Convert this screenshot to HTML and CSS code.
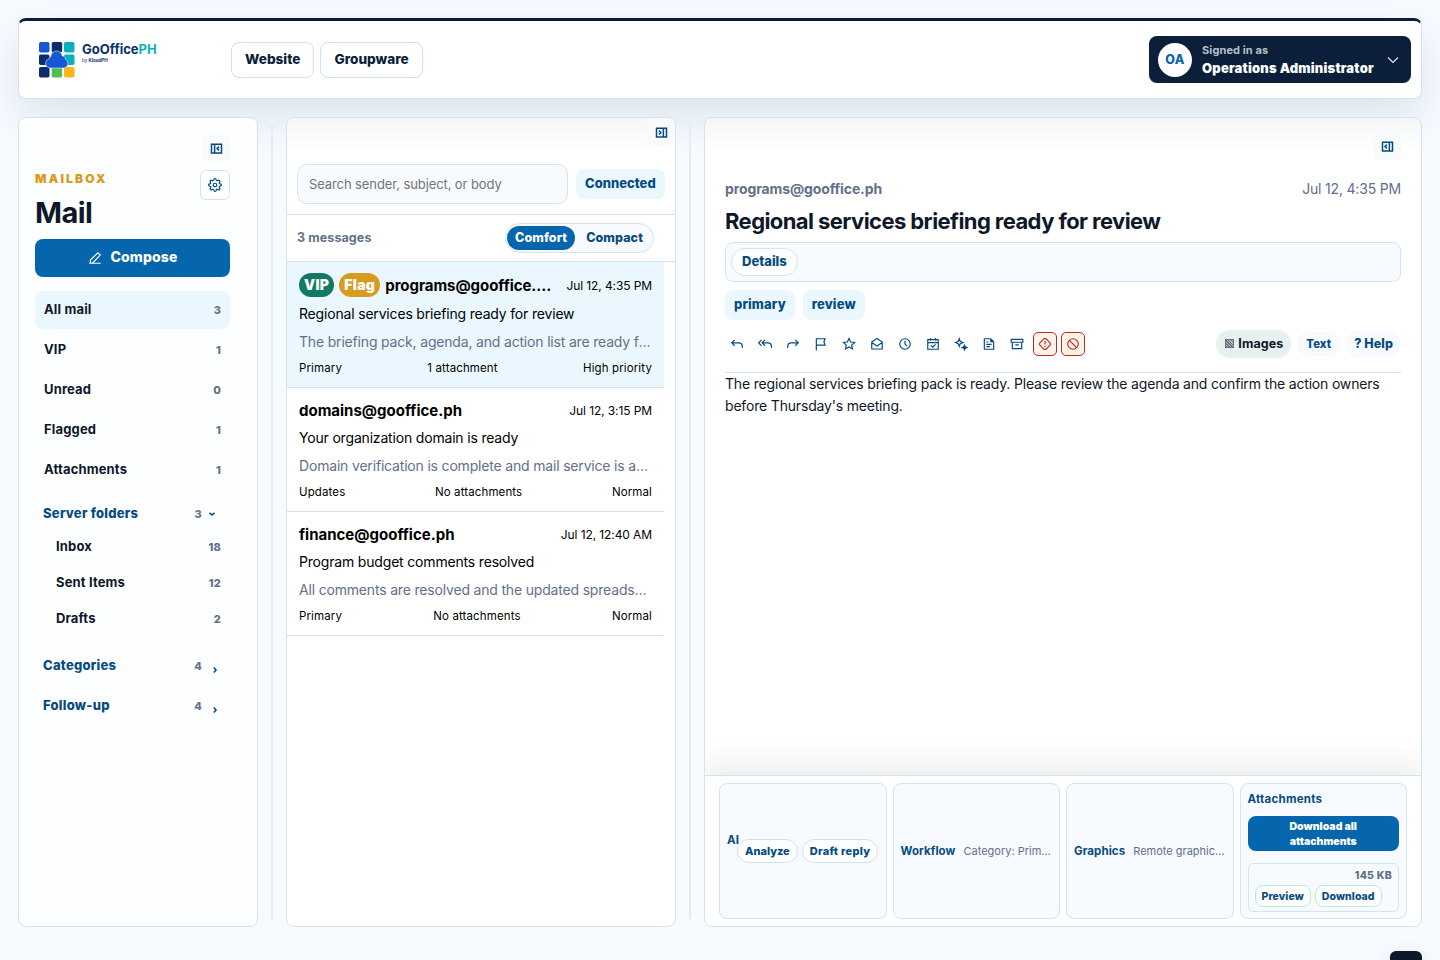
FILE: index.html
```html
<!DOCTYPE html>
<html lang="en">
<head>
    <meta charset="UTF-8">
    <title>GoOfficePH Mail</title>
    <link rel="stylesheet" href="styles.css">
</head>
<body>
    <!-- Top bar -->
    <header class="topbar">
        <div class="brand">
            <svg class="brand-mark" viewBox="0 0 36 36">
                <rect x="0" y="0" width="10.5" height="10.5" rx="1.8" fill="#1657d6"/>
                <rect x="12.7" y="0" width="10.5" height="10.5" rx="1.8" fill="#0b2e6b"/>
                <rect x="25" y="0" width="10.5" height="10.5" rx="1.8" fill="#0cb0ba"/>
                <rect x="0" y="12.5" width="10.5" height="10.5" rx="1.8" fill="#0b2e6b"/>
                <rect x="25" y="12.5" width="10.5" height="10.5" rx="1.8" fill="#0cb0ba"/>
                <rect x="0" y="25" width="10.5" height="10.5" rx="1.8" fill="#0b2e6b"/>
                <rect x="12.7" y="25" width="10.5" height="10.5" rx="1.8" fill="#54b957"/>
                <rect x="25" y="25" width="10.5" height="10.5" rx="1.8" fill="#f8b51c"/>
                <path d="M10.500 26a4.700 4.700 0 0 1-.5-9.200c.2-.9.8-1.500 1.700-2C12.200 11 14.500 9 17.500 9s5.300 2 5.800 5c2 .2 3.200 1.600 3.300 3.500 1.400.8 2.200 2.200 2.200 4A4.300 4.300 0 0 1 24.500 26z" fill="#1657d6" stroke="#fff" stroke-width=".5"/>
            </svg>
            <div class="brand-text">
                <div class="brand-name">GoOffice<span>PH</span></div>
                <div class="brand-sub">by <b>KloudPH</b></div>
            </div>
        </div>
        <nav class="topnav">
            <a class="topnav-link">Website</a>
            <a class="topnav-link">Groupware</a>
        </nav>
        <div class="account">
            <div class="avatar">OA</div>
            <div class="account-text">
                <span class="account-label">Signed in as</span>
                <span class="account-name">Operations Administrator</span>
            </div>
            <svg class="account-arrow" viewBox="0 0 12 12"><path d="M1 3.500l5 5 5-5"/></svg>
        </div>
    </header>

    <main class="workspace">
        <!-- Folders -->
        <aside class="panel sidebar">
            <div class="sidebar-head">
                <div>
                    <div class="eyebrow">Mailbox</div>
                    <h1>Mail</h1>
                </div>
                <div class="sidebar-tools">
                    <button class="pane-toggle"><svg class="icon" viewBox="0 0 24 24"><path d="M4 5h16v14H4zM9 5v14M16 9l-3 3 3 3"/></svg></button>
                    <button class="settings-btn"><svg class="icon gear" viewBox="0 0 24 24"><circle cx="12" cy="12" r="3"/><path d="M19.4 15a1.65 1.65 0 0 0 .33 1.82l.06.06a2 2 0 0 1 0 2.83 2 2 0 0 1-2.83 0l-.06-.06a1.65 1.65 0 0 0-1.82-.33 1.65 1.65 0 0 0-1 1.51V21a2 2 0 0 1-2 2 2 2 0 0 1-2-2v-.09A1.65 1.65 0 0 0 9 19.4a1.65 1.65 0 0 0-1.82.33l-.06.06a2 2 0 0 1-2.83 0 2 2 0 0 1 0-2.83l.06-.06a1.65 1.65 0 0 0 .33-1.82 1.65 1.65 0 0 0-1.51-1H3a2 2 0 0 1-2-2 2 2 0 0 1 2-2h.09A1.65 1.65 0 0 0 4.6 9a1.65 1.65 0 0 0-.33-1.82l-.06-.06a2 2 0 0 1 0-2.83 2 2 0 0 1 2.83 0l.06.06a1.65 1.65 0 0 0 1.82.33H9a1.65 1.65 0 0 0 1-1.51V3a2 2 0 0 1 2-2 2 2 0 0 1 2 2v.09a1.65 1.65 0 0 0 1 1.51 1.65 1.65 0 0 0 1.82-.33l.06-.06a2 2 0 0 1 2.83 0 2 2 0 0 1 0 2.83l-.06.06a1.65 1.65 0 0 0-.33 1.82V9a1.65 1.65 0 0 0 1.51 1H21a2 2 0 0 1 2 2 2 2 0 0 1-2 2h-.09a1.65 1.65 0 0 0-1.51 1z"/></svg></button>
                </div>
            </div>
            <button class="compose"><svg class="icon" viewBox="0 0 24 24"><path d="M2 21h20M4 20.500v-5L17 3l4 4L8 20.500z"/></svg>Compose</button>
            <nav class="views">
                <a class="view active">All mail <span>3</span></a>
                <a class="view">VIP <span>1</span></a>
                <a class="view">Unread <span>0</span></a>
                <a class="view">Flagged <span>1</span></a>
                <a class="view">Attachments <span>1</span></a>
            </nav>
            <div class="group-head">Server folders <span>3</span><svg class="chev" viewBox="0 0 8 8"><path d="M1.500 2.800L4 5l2.500-2.200"/></svg></div>
            <div class="folders">
                <a class="folder">Inbox <span>18</span></a>
                <a class="folder">Sent Items <span>12</span></a>
                <a class="folder">Drafts <span>2</span></a>
            </div>
            <div class="group-head closed">Categories <span>4</span><svg class="chev" viewBox="0 0 8 8"><path d="M2.800 1.500L5 4 2.800 6.500"/></svg></div>
            <div class="group-head closed">Follow-up <span>4</span><svg class="chev" viewBox="0 0 8 8"><path d="M2.800 1.500L5 4 2.800 6.500"/></svg></div>
        </aside>

        <div class="resizer"></div>

        <!-- Message list -->
        <section class="panel list">
            <div class="list-top"><button class="pane-toggle"><svg class="icon" viewBox="0 0 24 24"><path d="M4 5h16v14H4zM15 5v14M8 9l3 3-3 3"/></svg></button></div>
            <div class="search-row">
                <input class="search" type="text" placeholder="Search sender, subject, or body">
                <span class="tag">Connected</span>
            </div>
            <div class="list-bar">
                <span class="count">3 messages</span>
                <div class="density"><button class="on">Comfort</button><button>Compact</button></div>
            </div>
            <article class="message selected">
                <div class="message-head">
                    <span class="pill vip">VIP</span><span class="pill flag">Flag</span>
                    <strong>programs@gooffice.ph</strong><time>Jul 12, 4:35 PM</time>
                </div>
                <div class="subject">Regional services briefing ready for review</div>
                <div class="preview">The briefing pack, agenda, and action list are ready for your review.</div>
                <div class="meta"><span>Primary</span><span>1 attachment</span><span>High priority</span></div>
            </article>
            <article class="message">
                <div class="message-head"><strong>domains@gooffice.ph</strong><time>Jul 12, 3:15 PM</time></div>
                <div class="subject">Your organization domain is ready</div>
                <div class="preview">Domain verification is complete and mail service is active.</div>
                <div class="meta"><span>Updates</span><span>No attachments</span><span>Normal</span></div>
            </article>
            <article class="message">
                <div class="message-head"><strong>finance@gooffice.ph</strong><time>Jul 12, 12:40 AM</time></div>
                <div class="subject">Program budget comments resolved</div>
                <div class="preview">All comments are resolved and the updated spreadsheet is ready.</div>
                <div class="meta"><span>Primary</span><span>No attachments</span><span>Normal</span></div>
            </article>
        </section>

        <div class="resizer"></div>

        <!-- Reader -->
        <section class="panel reader">
            <div class="reader-main">
                <div class="reader-top"><button class="pane-toggle"><svg class="icon" viewBox="0 0 24 24"><path d="M4 5h16v14H4zM15 5v14M11 9l-3 3 3 3"/></svg></button></div>
                <div class="reader-from"><strong>programs@gooffice.ph</strong><time>Jul 12, 4:35 PM</time></div>
                <h2>Regional services briefing ready for review</h2>
                <div class="details"><button>Details</button></div>
                <div class="tags"><span class="tag">primary</span><span class="tag">review</span></div>
                <div class="toolbar">
                    <button class="tool"><svg class="icon" viewBox="0 0 24 24"><path d="M8 5l-5 5 5 5M3 10h12a6 6 0 0 1 6 6v3"/></svg></button>
                    <button class="tool"><svg class="icon" viewBox="0 0 24 24"><path d="M6 5l-5 5 5 5M12 5l-5 5 5 5M7 10h10a6 6 0 0 1 6 6v3"/></svg></button>
                    <button class="tool"><svg class="icon" viewBox="0 0 24 24"><path d="M16 5l5 5-5 5M21 10H9a6 6 0 0 0-6 6v3"/></svg></button>
                    <button class="tool"><svg class="icon" viewBox="0 0 24 24"><path d="M4 23V3h15l-2 5.500 2 5.500H4"/></svg></button>
                    <button class="tool"><svg class="icon" viewBox="0 0 24 24"><path d="M12 2.500l2.800 6.200 6.800.7-5.100 4.500 1.500 6.600-6-3.400-6 3.400 1.500-6.600-5.100-4.500 6.800-.7z"/></svg></button>
                    <button class="tool"><svg class="icon" viewBox="0 0 24 24"><path d="M3 8.500l9-6 9 6v12H3zM3 9.500l9 6 9-6"/></svg></button>
                    <button class="tool"><svg class="icon" viewBox="0 0 24 24"><circle cx="12" cy="12" r="9"/><path d="M12 6.500V12l3.500 3.500"/></svg></button>
                    <button class="tool"><svg class="icon" viewBox="0 0 24 24"><path d="M3 4.500h18V21H3zM3 9.500h18M7.500 1.500v5M16.500 1.500v5M8.500 14.500l3 3 5-5"/></svg></button>
                    <button class="tool"><svg class="icon" viewBox="0 0 24 24"><path d="M9 3l1.800 4.700L15.500 9.500l-4.700 1.800L9 16l-1.800-4.700L2.500 9.500l4.700-1.800z"/><path d="M18 14l1.200 2.800L22 18l-2.800 1.200L18 22l-1.200-2.800L14 18l2.800-1.200z" fill="currentColor"/></svg></button>
                    <button class="tool"><svg class="icon" viewBox="0 0 24 24"><path d="M4 3h11l5 5v13H4zM15 3v5h5M7.500 12.500h9M7.500 16.500h6M7.500 8.500H11"/></svg></button>
                    <button class="tool"><svg class="icon" viewBox="0 0 24 24"><path d="M2 4h20v5H2zM4 9v11h16V9M9 13.500h6"/></svg></button>
                    <button class="tool danger"><svg class="icon" viewBox="0 0 24 24"><path d="M10.500 2.800h3l7.700 7.700v3l-7.700 7.700h-3l-7.700-7.700v-3zM12 7v6M12 15v2"/></svg></button>
                    <button class="tool danger"><svg class="icon" viewBox="0 0 24 24"><circle cx="12" cy="12" r="9"/><path d="M5.800 5.800l12.400 12.400"/></svg></button>
                    <div class="modes">
                        <button class="mode images"><i></i>Images</button>
                        <button class="mode text">Text</button>
                        <button class="mode">? Help</button>
                    </div>
                </div>
                <p class="mail-body">The regional services briefing pack is ready. Please review the agenda and confirm the action owners before Thursday's meeting.</p>
            </div>

            <footer class="dock">
                <div class="card ai">
                    <b>AI</b>
                    <div class="ai-actions"><button>Analyze</button><button>Draft reply</button></div>
                </div>
                <div class="card"><b>Workflow</b><span class="card-text">Category: Primary, no follow-up</span></div>
                <div class="card"><b>Graphics</b><span class="card-text">Remote graphics are blocked</span></div>
                <div class="card files">
                    <b>Attachments</b>
                    <button class="download-all">Download all attachments</button>
                    <div class="file">
                        <span class="file-size">145 KB</span>
                        <div class="file-actions"><button>Preview</button><button>Download</button></div>
                    </div>
                </div>
            </footer>
        </section>
    </main>

    <div class="launcher"></div>
</body>
</html>
```
FILE: styles.css
```css
* {
    box-sizing: border-box;
}

body {
    margin: 0;
    height: 960px;
    padding: 18px;
    overflow: hidden;
    font-family: Inter, "Liberation Sans", sans-serif;
    font-size: 14px;
    line-height: 1.5;
    color: #0f172a;
    background: #f5fbff;
}

button {
    font-family: inherit;
    margin: 0;
    padding: 0;
    border: 0;
    color: #064b80;
    font-weight: 800;
}

.icon {
    width: 14px;
    height: 14px;
    fill: none;
    stroke: currentColor;
    stroke-width: 2;
    flex: none;
}

/* Top bar */
.topbar {
    display: flex;
    align-items: center;
    height: 81px;
    padding: 0 10px 0 20px;
    background: #fff;
    border: 1px solid #d6e2ee;
    border-top: 3px solid #0b1f3a;
    border-radius: 8px;
    box-shadow: 0 18px 45px rgba(15, 23, 80, 0.1);
}

.brand {
    display: flex;
    width: 192px;
    gap: 7px;
}

.brand-mark {
    width: 36px;
    height: 36px;
}

.brand-name {
    font-size: 13px;
    font-weight: 700;
    line-height: 15px;
    letter-spacing: 0;
    color: #0b2e6b;
}

.brand-name span {
    color: #0cb0ba;
}

.brand-sub {
    margin-top: 1px;
    font-size: 4.5px;
    line-height: 6px;
    color: #0b2e6b;
}

.topnav {
    display: flex;
    gap: 6px;
    flex: 1;
}

.topnav-link {
    height: 36px;
    padding: 0 13px;
    line-height: 33px;
    border: 1px solid #cfe0ee;
    border-radius: 8px;
    font-weight: 800;
    font-size: 13.6px;
    color: #0b1f3a;
}

.account {
    display: flex;
    align-items: center;
    width: 262px;
    height: 47px;
    padding: 0 12px 0 9px;
    border-radius: 8px;
    background: #0b1f3a;
    color: #fff;
}

.avatar {
    width: 34px;
    height: 34px;
    margin-right: 10px;
    border-radius: 50%;
    background: #fff;
    color: #0566ae;
    font-size: 12.5px;
    font-weight: 800;
    letter-spacing: 0.3px;
    line-height: 34px;
    text-align: center;
}

.account-text {
    flex: 1;
    padding-bottom: 2px;
    white-space: nowrap;
}

.account-label,
.account-name {
    display: block;
    font-size: 11px;
    line-height: 18px;
    font-weight: 700;
    letter-spacing: 0.1px;
    color: #b8c0cb;
}

.account-name {
    font-size: 13px;
    font-weight: 900;
    letter-spacing: 0.22px;
    color: #fff;
}

.account-arrow {
    width: 12px;
    height: 12px;
    fill: none;
    stroke: #dfe5ec;
    stroke-width: 1.2;
}

/* Columns */
.workspace {
    display: grid;
    grid-template-columns: 240px 28px 390px 28px 718px;
    height: 810px;
    margin-top: 18px;
}

.panel {
    min-width: 0;
    border: 1px solid #d6e2ee;
    border-radius: 8px;
    background: #fff;
    overflow: hidden;
}

.resizer {
    width: 2px;
    margin: 8px auto;
    background: #e4ebf4;
}

.pane-toggle {
    display: flex;
    align-items: center;
    justify-content: center;
    width: 28px;
    height: 28px;
    padding-left: 1px;
    border-radius: 6px;
    background: #f8fafc;
}

.pane-toggle .icon {
    width: 15px;
    height: 15px;
    stroke-width: 2.4;
}

/* Sidebar */
.sidebar {
    padding: 16px 27px 0 16px;
    background: #fdfeff;
}

.sidebar-head {
    display: flex;
    justify-content: space-between;
    height: 105px;
}

.eyebrow {
    margin-top: 36px;
    font-size: 12px;
    line-height: 18px;
    font-weight: 900;
    letter-spacing: 2.2px;
    text-transform: uppercase;
    color: #d99a20;
}

h1 {
    margin: 8px 0 0;
    font-size: 29px;
    line-height: 34px;
    font-weight: 700;
    letter-spacing: -0.6px;
}

.sidebar-tools {
    display: flex;
    flex-direction: column;
    align-items: flex-end;
    gap: 8px;
}

.settings-btn {
    display: flex;
    align-items: center;
    justify-content: center;
    width: 30px;
    height: 30px;
    border: 1px solid #d6e2ee;
    border-radius: 6px;
    background: #fff;
}

.compose {
    display: flex;
    align-items: center;
    justify-content: center;
    gap: 9px;
    width: 100%;
    height: 38px;
    border-radius: 8px;
    background: #0566ae;
    color: #fff;
    font-size: 14px;
    letter-spacing: 0.1px;
    padding-bottom: 3px;
}

.compose .icon {
    margin-top: 2px;
}

.views {
    display: grid;
    gap: 2px;
    margin: 14px 0 6px;
}

.view,
.folder {
    display: flex;
    align-items: center;
    justify-content: space-between;
    height: 38px;
    padding: 0 9px;
    border-radius: 8px;
    font-size: 13px;
    font-weight: 700;
    letter-spacing: 0.15px;
}

.view.active {
    background: #eaf7ff;
}

.view span,
.folder span,
.group-head span {
    font-size: 11px;
    font-weight: 800;
    color: #64708a;
}

.group-head {
    display: flex;
    align-items: center;
    height: 38px;
    padding: 0 14px 0 8px;
    font-size: 13px;
    font-weight: 800;
    letter-spacing: 0.25px;
    color: #064b80;
}

.group-head span {
    margin-left: auto;
}

.chev {
    width: 8px;
    height: 8px;
    margin-left: 6px;
    fill: none;
    stroke: currentColor;
    stroke-width: 1.6;
}

.folders {
    margin: -4px 0 9px;
}

.folder {
    height: 36px;
    padding-left: 21px;
}

.closed {
    height: 40px;
    padding-right: 11px;
}

.closed .chev {
    margin: 7px 0 0 9px;
}

/* Message list */
.list,
.reader {
    background: #fff linear-gradient(#f5f6f8, #fff) no-repeat;
    background-size: 100% 34px;
}

.list-top {
    display: flex;
    justify-content: flex-end;
    height: 46px;
}

.search-row {
    display: flex;
    align-items: center;
    gap: 8px;
    height: 51px;
    padding: 0 10px 10px;
    border-bottom: 1px solid #d6e2ee;
}

.search {
    width: 271px;
    height: 40px;
    padding: 0 11px;
    border: 1px solid #d6e2ee;
    border-radius: 10px;
    background: #f7faff;
    font-family: inherit;
    font-size: 13px;
    letter-spacing: -0.1px;
}

.tag {
    height: 30px;
    padding: 0 9px;
    border-radius: 8px;
    background: #eaf7ff;
    color: #064b80;
    font-size: 13px;
    line-height: 29px;
    font-weight: 800;
}

.list-bar {
    display: flex;
    align-items: center;
    justify-content: space-between;
    height: 47px;
    padding: 0 21px 0 10px;
    border-bottom: 1px solid #d6e2ee;
}

.count {
    font-size: 12.5px;
    font-weight: 700;
    letter-spacing: 0.1px;
    color: #64708a;
}

.density {
    display: flex;
    height: 30px;
    padding: 2px 2px 2px 1px;
    border: 1px solid #d6e2ee;
    border-radius: 15px;
    background: #f7faff;
}

.density button {
    padding: 0 8px;
    border-radius: 13px;
    background: transparent;
    font-size: 12.5px;
    line-height: 22px;
    letter-spacing: 0.08px;
}

.density button + button {
    padding: 0 8px 0 11px;
}

.density .on {
    background: #0566ae;
    color: #fff;
}

.message {
    width: 377px;
    height: 124px;
    padding: 12px 12px 0;
    border-bottom: 1px solid #d6e2ee;
    color: #000;
    white-space: nowrap;
}

.message.selected {
    height: 126px;
    padding-top: 11px;
    background: #eaf7ff;
}

.message-head {
    display: flex;
    align-items: center;
    gap: 5px;
    height: 22px;
}

.selected .message-head {
    height: 25px;
}

.message-head strong {
    flex: 1;
    min-width: 0;
    overflow: hidden;
    text-overflow: ellipsis;
    font-size: 15px;
    font-weight: 700;
}

.selected strong {
    padding-top: 1px;
    letter-spacing: -0.05px;
}

.message-head time {
    margin-left: 7px;
    font-size: 12px;
    letter-spacing: -0.1px;
}

.pill {
    height: 24px;
    margin-top: -2px;
    padding: 0 5px;
    border-radius: 12px;
    color: #fff;
    font-size: 14px;
    line-height: 24px;
    font-weight: 900;
    letter-spacing: 0.3px;
}

.vip {
    background: #127a63;
}

.flag {
    background: #d99a20;
}

.subject,
.preview {
    margin-top: 4px;
    height: 23px;
    line-height: 23px;
    font-size: 14px;
    letter-spacing: -0.18px;
    overflow: hidden;
    text-overflow: ellipsis;
}

.preview {
    margin-top: 5px;
    color: #64708a;
}

.meta {
    display: flex;
    justify-content: space-between;
    margin-top: 6px;
    font-size: 11.5px;
    line-height: 18px;
    letter-spacing: 0.12px;
}

/* Reader */
.reader {
    display: flex;
    flex-direction: column;
}

.reader-main {
    flex: 1;
    padding: 14px 20px 0;
}

.reader-top {
    display: flex;
    justify-content: flex-end;
    height: 46px;
}

.reader-from {
    display: flex;
    justify-content: space-between;
    line-height: 21px;
    letter-spacing: -0.18px;
    color: #64708a;
}

.reader-from strong {
    letter-spacing: -0.12px;
}

h2 {
    margin: 5px 0 4px;
    font-size: 22px;
    line-height: 34px;
    font-weight: 700;
    letter-spacing: -0.58px;
}

.details {
    height: 40px;
    padding: 5px;
    border: 1px solid #d6e2ee;
    border-radius: 8px;
    background: #f7faff;
}

.details button {
    height: 28px;
    padding: 0 10px 2px;
    border: 1px solid #d6e2ee;
    border-radius: 14px;
    background: #fff;
    font-size: 13px;
}

.tags {
    display: flex;
    gap: 8px;
    margin-top: 8px;
}

.tags .tag {
    letter-spacing: 0.13px;
}

.toolbar {
    display: flex;
    align-items: center;
    gap: 4px;
    height: 53px;
    padding-bottom: 5px;
    border-bottom: 1px solid #d6e2ee;
}

.tool {
    display: flex;
    align-items: center;
    justify-content: center;
    width: 24px;
    height: 24px;
    border-radius: 5px;
    background: transparent;
}

.tool.danger {
    border: 1px solid #c02a1e;
    background: #fff4ec;
    color: #c02a1e;
}

.modes {
    display: flex;
    align-items: center;
    gap: 6px;
    margin-left: auto;
}

.mode {
    height: 28px;
    padding: 0 8px;
    border-radius: 14px;
    background: #f7faff;
    font-size: 12.5px;
    letter-spacing: 0.08px;
}

.mode.images {
    padding-left: 9px;
    background: #e7f1ef;
    color: #0f172a;
    font-weight: 700;
}

.mode.images i {
    display: inline-block;
    width: 9px;
    height: 9px;
    margin-right: 4px;
    border: 1px solid #6b7280;
    background: repeating-linear-gradient(45deg, #6b7280 0 1px, #b4bfc3 1px 2px);
}

.mode.text {
    height: 24px;
    padding: 0 9px;
    font-size: 11.3px;
}

.mail-body {
    margin: 0;
    line-height: 22px;
    letter-spacing: -0.18px;
}

/* Bottom dock */
.dock {
    position: relative;
    display: grid;
    grid-template-columns: repeat(4, minmax(0, 1fr));
    gap: 6px;
    height: 151px;
    padding: 7px 14px;
    border-top: 1px solid #d6e2ee;
    background: #fff;
    box-shadow: 0 -12px 28px rgba(15, 30, 23, 0.08);
}

.card {
    display: flex;
    align-items: center;
    gap: 8px;
    padding: 0 7px;
    border: 1px solid #d6e2ee;
    border-radius: 8px;
    background: #f7faff;
    font-size: 11.5px;
    color: #64708a;
}

.card b {
    flex: none;
    padding-top: 2px;
    font-weight: 700;
    letter-spacing: 0.08px;
    color: #064b80;
}

.card-text {
    overflow: hidden;
    text-overflow: ellipsis;
    white-space: nowrap;
    font-size: 11px;
}

.card.ai {
    gap: 0;
}

.ai b {
    width: 10px;
    margin-bottom: 22px;
}

.ai-actions {
    display: flex;
    gap: 4px;
    flex: none;
}

.ai-actions button {
    height: 24px;
    padding: 0 7px 1px;
    border: 1px solid #cfe0ee;
    border-radius: 12px;
    background: #fff;
    font-size: 11px;
}

.ai-actions button + button {
    letter-spacing: 0.28px;
}

.card.files {
    flex-direction: column;
    align-items: stretch;
    gap: 0;
    padding-top: 5px;
}

.files b {
    height: 17px;
    letter-spacing: 0.25px;
}

.download-all {
    height: 35px;
    margin: 10px 0 12px;
    padding: 0 36px;
    border-radius: 8px;
    background: #0566ae;
    color: #fff;
    font-size: 10.5px;
    line-height: 15px;
    font-weight: 900;
}

.file {
    height: 49px;
    padding: 3px 6px;
    border: 1px solid #d6e2ee;
    border-radius: 6px;
    text-align: right;
}

.file-size {
    display: block;
    font-size: 10.5px;
    line-height: 18px;
    font-weight: 800;
    letter-spacing: 0.25px;
}

.file-actions {
    display: flex;
    gap: 4px;
}

.file-actions button {
    height: 22px;
    padding: 0 6px;
    border: 1px solid #bfe8dc;
    border-radius: 8px;
    background: #fff;
    font-size: 10.5px;
    letter-spacing: 0.08px;
}

.launcher {
    position: fixed;
    right: 18px;
    top: 951px;
    width: 32px;
    height: 32px;
    border-radius: 6px;
    background: #0f172a;
    box-shadow: 0 8px 24px rgba(15, 23, 42, 0.12);
}
```
